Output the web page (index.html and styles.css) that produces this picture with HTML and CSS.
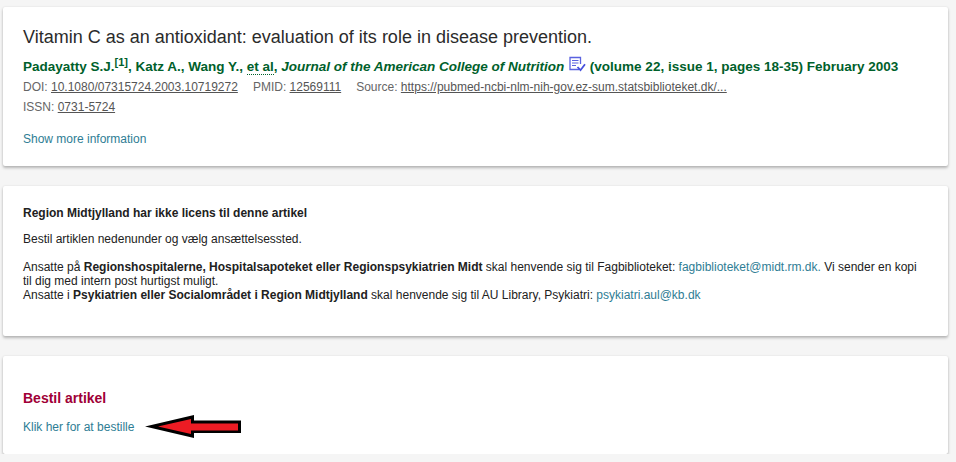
FILE: index.html
```html
<!DOCTYPE html>
<html lang="da">
<head>
<meta charset="utf-8">
<title>Vitamin C as an antioxidant</title>
<link rel="stylesheet" href="styles.css">
</head>
<body>
<main class="page">
  <section class="card card-record">
    <h1 class="title">Vitamin C as an antioxidant: evaluation of its role in disease prevention.</h1>
    <p class="cite"><span>Padayatty S.J.<sup class="ref">[1]</sup>, Katz A., Wang Y., <span class="etal">et al</span>, </span><em>Journal of the American College of Nutrition</em>
      <svg class="peer" width="17" height="17" viewBox="1 0 17 17" aria-hidden="true"><path d="M11 13.500H2V1.500h10.500V8" fill="none" stroke="#5a62e0" stroke-width="1.300"/><path d="M4 4.500h6.500M4 7h6.500M4 9.500h4" fill="none" stroke="#5a62e0" stroke-width="1.200"/><path d="M9.500 11l3 3.200 4.500-6" fill="none" stroke="#4650dc" stroke-width="1.800"/></svg>
      <span>(volume 22, issue 1, pages 18-35) February 2003</span></p>
    <p class="meta"><span class="meta-item">DOI: <a href="#">10.1080/07315724.2003.10719272</a></span><span class="meta-item">PMID: <a href="#">12569111</a></span><span class="meta-item">Source: <a href="#">https://pubmed-ncbi-nlm-nih-gov.ez-sum.statsbiblioteket.dk/...</a></span></p>
    <p class="meta">ISSN: <a href="#">0731-5724</a></p>
    <p class="more"><a href="#" class="link">Show more information</a></p>
  </section>
  <section class="card card-notice">
    <p class="notice-head">Region Midtjylland har ikke licens til denne artikel</p>
    <p class="notice-sub">Bestil artiklen nedenunder og vælg ansættelsessted.</p>
    <p class="notice-body">Ansatte på <b>Regionshospitalerne, Hospitalsapoteket eller Regionspsykiatrien Midt</b> skal henvende sig til Fagbiblioteket: <a href="#" class="link">fagbiblioteket@midt.rm.dk.</a> Vi sender en kopi til dig med intern post hurtigst muligt.<br>Ansatte i <b>Psykiatrien eller Socialområdet i Region Midtjylland</b> skal henvende sig til AU Library, Psykiatri: <a href="#" class="link">psykiatri.aul@kb.dk</a></p>
  </section>
  <section class="card card-order">
    <h2 class="order-head">Bestil artikel</h2>
    <p class="order-row"><a href="#" class="link">Klik her for at bestille</a>
      <svg class="arrow" width="98" height="25" viewBox="0 0 98 25" aria-hidden="true"><path d="M1 12.500L50 1V6.500H97V19H50V24Z" fill="#000"/><path d="M14 12.500L47 5V9.500H94V16.500H47V20Z" fill="#ed1c24"/></svg></p>
  </section>
</main>
</body>
</html>
```
FILE: styles.css
```css
* { box-sizing: border-box; }
html, body { margin: 0; padding: 0; }
body {
  background: #f5f5f5;
  font-family: "Liberation Sans", Arial, sans-serif;
  color: #212121;
  overflow: hidden;
}
.page {
  display: flex;
  flex-direction: column;
  gap: 20px;
  width: 945px;
  margin-left: 3px;
  padding-top: 7px;
}
.card {
  background: #fff;
  border-radius: 2px;
  box-shadow: 0 2px 3px rgba(0, 0, 0, .25), 0 0 2px rgba(0, 0, 0, .1);
  padding-left: 20px;
  padding-right: 20px;
}
.card p, .card h1, .card h2 { margin: 0; }
.card-record { height: 159px; padding-top: 20px; }
.card-notice { height: 150px; padding-top: 20px; }
.card-order { height: 98px; padding-top: 33px; }
.title { font-size: 18px; font-weight: 400; line-height: 21px; color: #2b2b2b; }
.cite {
  margin-top: 8px !important;
  margin-bottom: 1px !important;
  font-size: 13.5px;
  font-weight: 700;
  line-height: 20px;
  height: 20px;
  color: #00602b;
  white-space: nowrap;
}
.ref { font-size: 11px; font-weight: 700; line-height: 0; }
.etal { border-bottom: 1px dotted #00602b; }
.peer { vertical-align: -2px; margin: 0 0 0 1px; }
.meta {
  font-size: 12px;
  line-height: 20px;
  color: #666;
  white-space: nowrap;
}
.meta a { color: #555; text-decoration: underline; }
.meta-item { margin-right: 15px; }
.more { margin-top: 12px !important; font-size: 12px; line-height: 20px; }
.link { color: #2e7d94; text-decoration: none; }
.notice-head { font-size: 12px; font-weight: 700; line-height: 14px; }
.notice-sub { margin-top: 12px !important; font-size: 12px; line-height: 14px; }
.notice-body { margin-top: 14px !important; font-size: 12px; line-height: 14px; }
.order-head { font-size: 14px; font-weight: 700; line-height: 18px; color: #a00037; }
.order-row { margin-top: 7px !important; font-size: 12px; line-height: 20px; display: flex; align-items: center; }
.arrow { margin-left: 10px; }
```
